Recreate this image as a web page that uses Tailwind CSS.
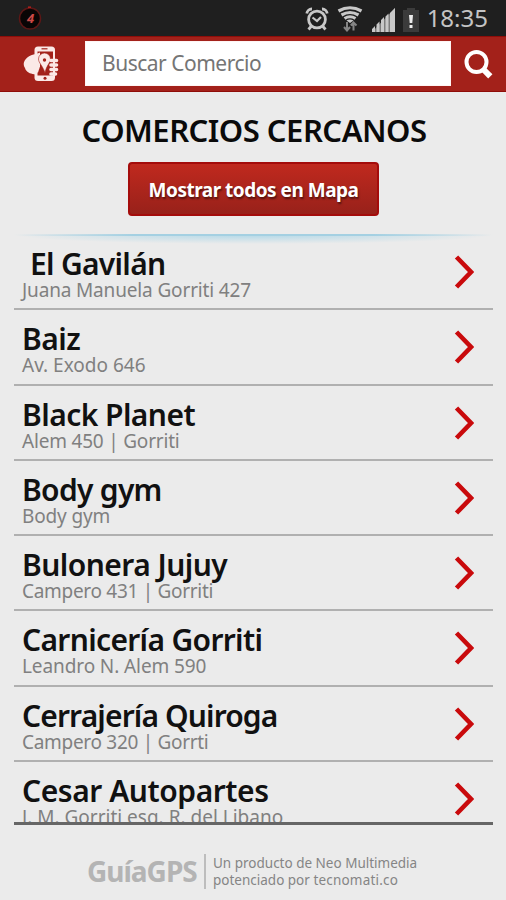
<!DOCTYPE html>
<html lang="es">
<head>
    <meta charset="UTF-8">
    <meta name="viewport" content="width=device-width, initial-scale=1.0">
    <title>GuíaGPS</title>
    <script src="https://cdn.jsdelivr.net/npm/@tailwindcss/browser@4"></script>
</head>
<body class="bg-[#ebebeb] font-['Noto_Sans',sans-serif]">
<div class="w-[506px] h-[900px] overflow-hidden flex flex-col">

    <!-- status bar -->
    <div class="h-9 shrink-0 bg-[#1f1f1f] flex items-center justify-between pl-[18px] pr-[18px]">
        <svg class="w-6 h-6" viewBox="0 0 24 24">
            <circle cx="12" cy="12.5" r="10.5" fill="#090505" stroke="#5c1716" stroke-width="1.5"/>
            <path d="M10 1.2h3" stroke="#b3201d" stroke-width="1.5"/>
            <text x="12.5" y="17" text-anchor="middle" font-size="13" font-weight="700" font-style="italic" fill="#cc4a48">4</text>
        </svg>
        <div class="flex items-center">
            <svg class="w-6 h-6 mr-2 mt-0.5" viewBox="0 0 24 24" fill="none" stroke="#c8c8c8" stroke-width="2.8">
                <circle cx="12" cy="12.5" r="8.4"/>
                <path d="M7.5 10.500l4.500 3.500 4-4" stroke-width="2.2"/>
                <path d="M1.800 6.500A5 5 0 0 1 7 2M22.200 6.500A5 5 0 0 0 17 2M6.500 19l-3 3.500M17.500 19l3 3.500"/>
            </svg>
            <svg class="w-[26px] h-[26px] mr-[9px] mt-0.5" viewBox="0 0 26 26" fill="none" stroke="#c8c8c8" stroke-width="3.200">
                <path d="M1.500 5Q13-1.500 24.500 5M4.500 9Q13 4 21.500 9M7.500 12.500Q13 9 18.500 12.500"/>
                <path d="M9.500 14.500Q13 12.500 16.500 14.500L13 17z" fill="#c8c8c8" stroke="none"/>
                <path d="M10 16v8M7 21l3 3.500 3-3.500M16.500 24.500v-8M13.800 19.500l2.700-3 3 3" stroke="#858585" stroke-width="2"/>
            </svg>
            <svg class="w-6 h-6 mr-[7px] mt-1" viewBox="0 0 24 24" fill="#c8c8c8">
                <path d="M0 24v-3l3-3v6zM4.500 24v-7.500l3-3V24zM9 24V12l3-3v15zM13.500 24V8.500l3-3V24zM18 24V5l5-5v24z"/>
                <path d="M0 24L23 0v24z" opacity=".55"/>
            </svg>
            <svg class="w-4 h-6 mr-[8px] mt-1" viewBox="0 0 16 24">
                <path d="M4 0h8v2h4v22H0V2h4z" fill="#3b3b3b"/>
                <path d="M6 7h4l-.7 8H6.700zM6.500 17h3v3h-3z" fill="#ededed"/>
            </svg>
            <span class="text-[24px] leading-9 text-[#c4c4c4]">18:35</span>
        </div>
    </div>

    <!-- search header -->
    <div class="h-14 shrink-0 bg-[#a3211a] border-y border-[#8f0d09] flex items-center">
        <svg class="w-9 h-9 ml-[23px]" viewBox="0 0 36 36">
            <path d="M13 8C6 9 1 13 .700 18c0 3 1.800 4 1.800 5.500C5 27 8 28 13 28.500z" fill="#fbe9e7"/>
            <rect x="11.500" y=".5" width="20.500" height="34.500" rx="3.500" fill="#fbe9e7"/>
            <path d="M14.500 5.500h15.500v24H14.500z" fill="#a3211a"/>
            <path d="M12 8.500l5-2v14l-2 6h-3z" fill="#fbe9e7"/>
            <path d="M18.500 2.800h6" stroke="#a3211a" stroke-width="1.200"/>
            <circle cx="22" cy="32.300" r="1.500" fill="#a3211a"/>
            <path d="M15.500 13a6 6 0 0 1 12 0c0 4-4 6-5.500 14C20 20 15.500 17 15.500 13z" fill="#fbe9e7" stroke="#a3211a" stroke-width=".6"/>
            <circle cx="21.500" cy="14" r="1.700" fill="#a3211a"/>
            <path d="M28 14.500h5.500M28 19h5.500M28 23.500h5.500M28 28h4.500" stroke="#fbe9e7" stroke-width="3.600" stroke-linecap="round"/>
        </svg>
        <div class="ml-[26px] w-[366px] h-[45px] mb-px bg-white border border-[#fff5f4] flex items-center pl-[16px]">
            <span class="text-[21px] mt-px tracking-[-0.5px] text-[#757575]">Buscar Comercio</span>
        </div>
        <svg class="w-[29px] h-[29px] ml-[13px]" viewBox="0 0 29 29" fill="none" stroke="#fff">
            <circle cx="12.500" cy="12" r="10" stroke-width="4"/>
            <path d="M19 19l7.300 7.300" stroke-width="6"/>
        </svg>
    </div>

    <h1 class="mt-[19px] h-[38px] pl-[2px] shrink-0 text-center text-[31px] leading-[38px] font-semibold text-[#0a0a0a] tracking-[-0.5px]">COMERCIOS CERCANOS</h1>

    <button class="mt-[13px] ml-[128px] w-[251px] h-[54px] pt-0.5 shrink-0 rounded-[4px] border-2 border-[#a40c0b] bg-linear-to-b from-[#c0291e] to-[#98211a] text-white text-[19px] tracking-[-0.5px] font-bold text-shadow-[1px_2px_2px_rgba(0,0,0,0.5)] whitespace-nowrap">Mostrar todos en Mapa</button>

    <!-- blue glow under the heading -->
    <svg class="mt-[18px] ml-[14px] w-[479px] h-[10px] -mb-[10px] shrink-0" viewBox="0 0 479 10">
        <defs>
            <radialGradient id="glow" gradientUnits="userSpaceOnUse" cx="0" cy="0" r="1" gradientTransform="translate(240 1) scale(238 9)">
                <stop offset="0" stop-color="#b4d9e8"/>
                <stop offset="1" stop-color="#b4d9e8" stop-opacity="0"/>
            </radialGradient>
            <linearGradient id="line">
                <stop offset="0" stop-color="#a4d0e2" stop-opacity="0"/>
                <stop offset=".25" stop-color="#a4d0e2"/>
                <stop offset=".75" stop-color="#a4d0e2"/>
                <stop offset="1" stop-color="#a4d0e2" stop-opacity="0"/>
            </linearGradient>
        </defs>
        <rect y="1" width="479" height="9" fill="url(#glow)"/>
        <rect y="0" width="479" height="2" fill="url(#line)"/>
    </svg>

    <!-- list -->
    <div class="ml-[14px] w-[479px] h-[591px] pt-px shrink-0 overflow-hidden border-b-[3px] border-[#666]">
        <div class="h-[75.3px] border-b-2 border-[#b0b0b0] flex justify-between pl-2 pr-[19px]">
            <div class="pt-[13px] whitespace-nowrap">
                <p class="pl-2 text-[30px] leading-8 font-semibold text-[#111] tracking-[-0.7px]">El Gavilán</p>
                <p class="text-[19px] leading-5 text-[#808080] tracking-[-0.15px]">Juana Manuela Gorriti 427</p>
            </div>
            <svg class="w-5 h-[34px] mt-5" viewBox="0 0 20 34" fill="none" stroke="#c90a0c" stroke-width="4.600"><path d="M2.500 2L17 17 2.500 32"/></svg>
        </div>
        <div class="h-[75.3px] border-b-2 border-[#b0b0b0] flex justify-between pl-2 pr-[19px]">
            <div class="pt-[13px] whitespace-nowrap">
                <p class="text-[30px] leading-8 font-semibold text-[#111] tracking-[-0.5px]">Baiz</p>
                <p class="text-[19px] leading-5 text-[#808080]">Av. Exodo 646</p>
            </div>
            <svg class="w-5 h-[34px] mt-5" viewBox="0 0 20 34" fill="none" stroke="#c90a0c" stroke-width="4.600"><path d="M2.500 2L17 17 2.500 32"/></svg>
        </div>
        <div class="h-[75.3px] border-b-2 border-[#b0b0b0] flex justify-between pl-2 pr-[19px]">
            <div class="pt-[13px] whitespace-nowrap">
                <p class="text-[30px] leading-8 font-semibold text-[#111] tracking-[-0.55px]">Black Planet</p>
                <p class="text-[19px] leading-5 text-[#808080] tracking-[-0.2px]">Alem 450 | Gorriti</p>
            </div>
            <svg class="w-5 h-[34px] mt-5" viewBox="0 0 20 34" fill="none" stroke="#c90a0c" stroke-width="4.600"><path d="M2.500 2L17 17 2.500 32"/></svg>
        </div>
        <div class="h-[75.3px] border-b-2 border-[#b0b0b0] flex justify-between pl-2 pr-[19px]">
            <div class="pt-[13px] whitespace-nowrap">
                <p class="text-[30px] leading-8 font-semibold text-[#111] tracking-[-0.7px]">Body gym</p>
                <p class="text-[19px] leading-5 text-[#808080] tracking-[-0.15px]">Body gym</p>
            </div>
            <svg class="w-5 h-[34px] mt-5" viewBox="0 0 20 34" fill="none" stroke="#c90a0c" stroke-width="4.600"><path d="M2.500 2L17 17 2.500 32"/></svg>
        </div>
        <div class="h-[75.3px] border-b-2 border-[#b0b0b0] flex justify-between pl-2 pr-[19px]">
            <div class="pt-[13px] whitespace-nowrap">
                <p class="text-[30px] leading-8 font-semibold text-[#111] tracking-[-0.55px]">Bulonera Jujuy</p>
                <p class="text-[19px] leading-5 text-[#808080] tracking-[-0.3px]">Campero 431 | Gorriti</p>
            </div>
            <svg class="w-5 h-[34px] mt-5" viewBox="0 0 20 34" fill="none" stroke="#c90a0c" stroke-width="4.600"><path d="M2.500 2L17 17 2.500 32"/></svg>
        </div>
        <div class="h-[75.3px] border-b-2 border-[#b0b0b0] flex justify-between pl-2 pr-[19px]">
            <div class="pt-[13px] whitespace-nowrap">
                <p class="text-[30px] leading-8 font-semibold text-[#111] tracking-[-0.67px]">Carnicería Gorriti</p>
                <p class="text-[19px] leading-5 text-[#808080] tracking-[-0.1px]">Leandro N. Alem 590</p>
            </div>
            <svg class="w-5 h-[34px] mt-5" viewBox="0 0 20 34" fill="none" stroke="#c90a0c" stroke-width="4.600"><path d="M2.500 2L17 17 2.500 32"/></svg>
        </div>
        <div class="h-[75.3px] border-b-2 border-[#b0b0b0] flex justify-between pl-2 pr-[19px]">
            <div class="pt-[13px] whitespace-nowrap">
                <p class="text-[30px] leading-8 font-semibold text-[#111] tracking-[-0.87px]">Cerrajería Quiroga</p>
                <p class="text-[19px] leading-5 text-[#808080] tracking-[-0.3px]">Campero 320 | Gorrti</p>
            </div>
            <svg class="w-5 h-[34px] mt-5" viewBox="0 0 20 34" fill="none" stroke="#c90a0c" stroke-width="4.600"><path d="M2.500 2L17 17 2.500 32"/></svg>
        </div>
        <div class="h-[75.3px] flex justify-between pl-2 pr-[19px]">
            <div class="pt-[13px] whitespace-nowrap">
                <p class="text-[30px] leading-8 font-semibold text-[#111] tracking-[-0.45px]">Cesar Autopartes</p>
                <p class="text-[19px] leading-5 text-[#808080]">J. M. Gorriti esq. R. del Libano</p>
            </div>
            <svg class="w-5 h-[34px] mt-5" viewBox="0 0 20 34" fill="none" stroke="#c90a0c" stroke-width="4.600"><path d="M2.500 2L17 17 2.500 32"/></svg>
        </div>
    </div>

    <!-- footer -->
    <div class="mt-7 flex items-center h-9 shrink-0 pl-[87px] whitespace-nowrap">
        <span class="w-[117px] text-[28px] font-bold tracking-[-1px] text-[#b4b4b4]">GuíaGPS</span>
        <div class="w-[2px] h-[35px] bg-[#bdbdbd]"></div>
        <p class="ml-[7px] pt-0.5 text-[13.5px] leading-[17px] text-[#858585]">Un producto de Neo Multimedia<br>potenciado por <span class="tracking-[0.2px]">tecnomati.co</span></p>
    </div>
</div>
</body>
</html>
